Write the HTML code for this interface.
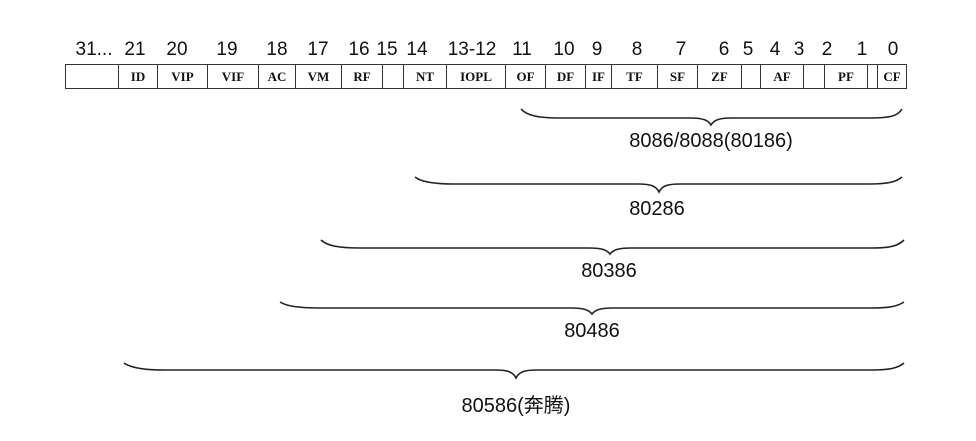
<!DOCTYPE html>
<html><head><meta charset="utf-8"><style>
body{margin:0;width:976px;height:441px;background:#fff;position:relative;overflow:hidden;font-family:"Liberation Sans","Noto Sans CJK SC",sans-serif;color:#111}
.n{position:absolute;top:39px;font-size:19px;transform:translateX(-50%);white-space:nowrap}
.c{position:absolute;top:64px;height:25px;border:1px solid #333;border-right:none;box-sizing:border-box;font:bold 13px "Liberation Serif",serif;text-align:center;line-height:23px}
.l{position:absolute;font-size:20px;transform:translateX(-50%);white-space:nowrap}
</style></head><body>
<div class="n" style="left:94px">31...</div>
<div class="n" style="left:135px">21</div>
<div class="n" style="left:177px">20</div>
<div class="n" style="left:227px">19</div>
<div class="n" style="left:277px">18</div>
<div class="n" style="left:318px">17</div>
<div class="n" style="left:359px">16</div>
<div class="n" style="left:387px">15</div>
<div class="n" style="left:417px">14</div>
<div class="n" style="left:472px">13-12</div>
<div class="n" style="left:522px">11</div>
<div class="n" style="left:564px">10</div>
<div class="n" style="left:597px">9</div>
<div class="n" style="left:637px">8</div>
<div class="n" style="left:681px">7</div>
<div class="n" style="left:724px">6</div>
<div class="n" style="left:748px">5</div>
<div class="n" style="left:775px">4</div>
<div class="n" style="left:799px">3</div>
<div class="n" style="left:827px">2</div>
<div class="n" style="left:862px">1</div>
<div class="n" style="left:893px">0</div>

<div class="c" style="left:65px;width:53px"></div>
<div class="c" style="left:118px;width:39px">ID</div>
<div class="c" style="left:157px;width:50px">VIP</div>
<div class="c" style="left:207px;width:51px">VIF</div>
<div class="c" style="left:258px;width:37px">AC</div>
<div class="c" style="left:295px;width:46px">VM</div>
<div class="c" style="left:341px;width:41px">RF</div>
<div class="c" style="left:382px;width:21px"></div>
<div class="c" style="left:403px;width:43px">NT</div>
<div class="c" style="left:446px;width:59px">IOPL</div>
<div class="c" style="left:505px;width:40px">OF</div>
<div class="c" style="left:545px;width:40px">DF</div>
<div class="c" style="left:585px;width:26px">IF</div>
<div class="c" style="left:611px;width:46px">TF</div>
<div class="c" style="left:657px;width:40px">SF</div>
<div class="c" style="left:697px;width:44px">ZF</div>
<div class="c" style="left:741px;width:19px"></div>
<div class="c" style="left:760px;width:43px">AF</div>
<div class="c" style="left:803px;width:21px"></div>
<div class="c" style="left:824px;width:43px">PF</div>
<div class="c" style="left:867px;width:10px"></div>
<div class="c" style="left:877px;width:30px;border-right:1px solid #333">CF</div>

<svg width="976" height="441" style="position:absolute;left:0;top:0" fill="none" stroke="#222" stroke-width="1.6">
<path d="M521,109 C527,116 540,118 560,118 L690,118 C703,118 708,120 711,125 C714,120 719,118 732,118 L870,118 C890,118 898,116 902,109"/>
<path d="M415,177 C421,182 434,184 454,184 L638,184 C651,184 656,186 659,192 C662,186 667,184 680,184 L870,184 C888,184 896,182 902,177"/>
<path d="M321,240 C327,246 340,248 360,248 L589,248 C602,248 607,250 610,254 C613,250 618,248 631,248 L872,248 C890,248 898,246 904,240"/>
<path d="M280,302 C286,306 299,308 319,308 L571,308 C584,308 589,310 592,314 C595,310 600,308 613,308 L872,308 C890,308 898,306 904,302"/>
<path d="M124,363 C131,368 144,370 164,370 L495,370 C508,370 513,372 516,378 C519,372 524,370 537,370 L872,370 C890,370 898,368 904,363"/>
</svg>
<div class="l" style="left:711px;top:130px">8086/8088(80186)</div>
<div class="l" style="left:657px;top:198px">80286</div>
<div class="l" style="left:609px;top:260px">80386</div>
<div class="l" style="left:592px;top:320px">80486</div>
<div class="l" style="left:516px;top:389px">80586(奔腾)</div>
</body></html>
